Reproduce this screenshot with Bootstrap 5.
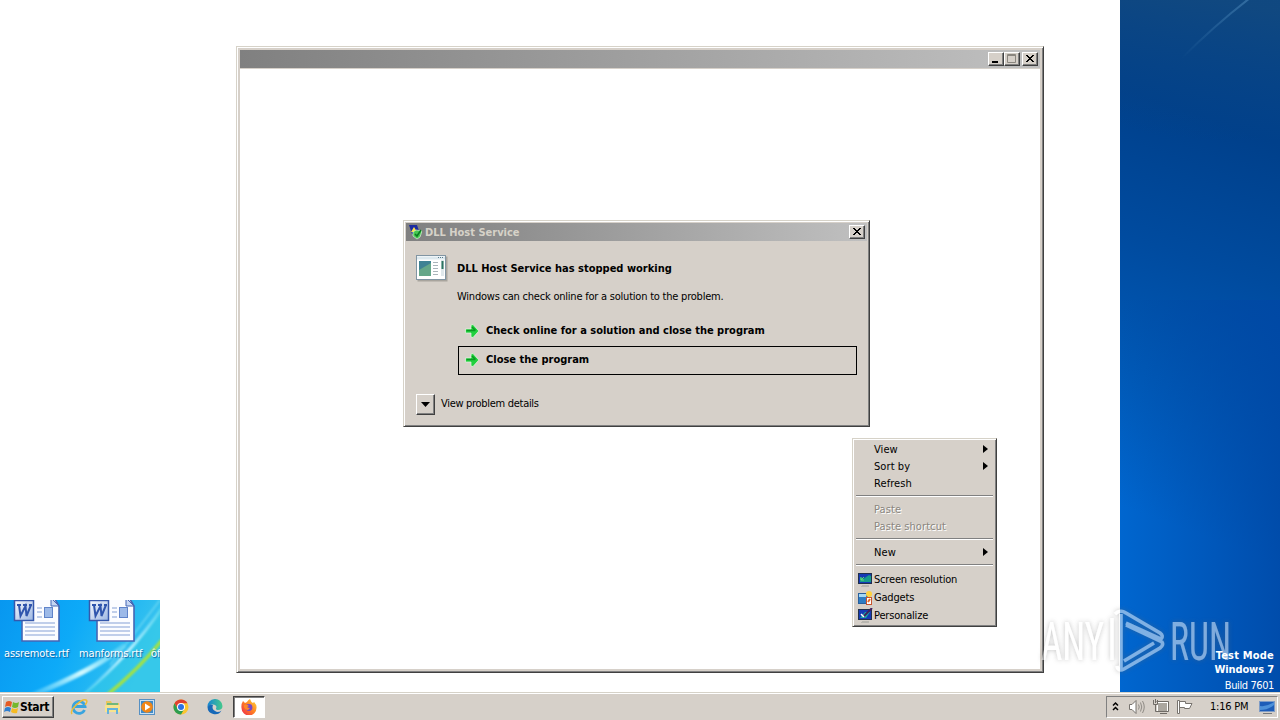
<!DOCTYPE html>
<html lang="en">
<head>
    <meta charset="UTF-8">
    <meta name="viewport" content="width=device-width, initial-scale=1.0">
    <title>Desktop</title>
    <link href="https://cdn.jsdelivr.net/npm/bootstrap@5.3.0/dist/css/bootstrap.min.css" rel="stylesheet">
    <style>
        body {
            width: 1280px;
            height: 720px;
            background: #fff;
            color: #000;
            font: 11px/14px "DejaVu Sans Condensed", "DejaVu Sans", sans-serif;
            font-stretch: condensed;
            letter-spacing: -0.22px;
        }
        svg { display: block; flex: none; }
        .desktop { height: 692px; }
        .win-face { background: #d6d0c9; }
        .bold-ui {
            font-family: "DejaVu Sans Condensed", "DejaVu Sans", sans-serif;
            font-stretch: condensed;
            font-weight: bold;
            letter-spacing: 0;
        }

        /* wallpaper */
        .wall-left { left: 0; top: 600px; width: 160px; height: 92px; }
        .wall-right { right: 0; top: 0; width: 160px; height: 692px; }
        .desk-label {
            top: 47px;
            color: #fff;
            letter-spacing: -0.12px;
            text-shadow: 1px 1px 1px #0b5f9e;
        }
        .test-mode { right: 6px; bottom: -1px; color: #fff; line-height: 14px; letter-spacing: -0.4px; }
        .test-mode .bold-ui { letter-spacing: 0.2px; }
        .test-mode .os-name { letter-spacing: -0.12px; }

        /* windows */
        .raised {
            border: 1px solid;
            border-color: #d6d2c8 #404040 #404040 #d6d2c8;
            box-shadow: inset 1px 1px #fff, inset -1px -1px #808080;
        }
        .main-win { left: 236px; top: 46px; width: 808px; height: 627px; padding: 3px; }
        .title-bar { background: linear-gradient(90deg, #808080, #c0c0c0); }
        .main-win .title-bar { height: 18px; margin-bottom: 1px; padding-right: 2px; }
        .caption-btn {
            width: 16px;
            height: 14px;
            padding: 0;
            background: #d6d0c9;
            border: 1px solid;
            border-color: #fff #404040 #404040 #fff;
            box-shadow: inset -1px -1px #808080;
        }
        .crash-win { left: 403px; top: 220px; width: 467px; height: 207px; padding: 2px; }
        .crash-win .title-bar { height: 18px; color: #d6d2c8; padding: 0 2px 0 2px; }
        .crash-win .title-bar span { padding-top: 1px; }
        .crash-body { padding: 14px 10px 0; }
        .choice { height: 29px; width: 399px; margin-left: 1px; padding: 0 0 2px 6px; border: 1px solid transparent; }
        .choice.chosen { border-color: #000; }
        .expand-btn { width: 19px; height: 21px; }

        /* context menu */
        .ctx-menu { left: 852px; top: 438px; width: 145px; height: 189px; padding: 2px; letter-spacing: 0.08px; }
        .ctx-item { height: 17px; padding: 0 6px 0 19px; }
        .ctx-item > svg:last-child { margin-bottom: 2px; }
        .ctx-item.with-icon { height: 18px; padding: 1px 0 0 2px; letter-spacing: -0.18px; }
        .ctx-item.off { color: #8a867f; text-shadow: 1px 1px #fff; }
        .ctx-line { height: 2px; margin: 3px 1px 4px; border-top: 1px solid #808080; border-bottom: 1px solid #fff; }

        .watermark { left: 1030px; top: 600px; }

        /* taskbar */
        .taskbar { height: 28px; box-shadow: inset 0 1px #d6d2c8, inset 0 2px #fff; padding: 4px 2px 2px; }
        .start-btn { width: 52px; height: 22px; padding: 0 0 0 1px; font-size: 12px; letter-spacing: -0.3px; }
        .task-icon { width: 34px; height: 22px; }
        .task-icon.running {
            width: 32px;
            background: #fff;
            border: 1px solid;
            border-color: #404040 #fff #fff #404040;
            box-shadow: inset 1px 1px #808080;
        }
        .tray {
            width: 172px;
            height: 22px;
            border: 1px solid;
            border-color: #808080 #fff #fff #808080;
            padding-left: 4px;
        }
    </style>
</head>
<body class="overflow-hidden">

<!-- shared icons -->
<svg width="0" height="0" class="position-absolute">
    <defs>
        <linearGradient id="wbox" x1="0" y1="0" x2="1" y2="1"><stop offset="0" stop-color="#f6f9fe"/><stop offset="1" stop-color="#9cb6e2"/></linearGradient>
        <symbol id="word" viewBox="0 0 50 44">
            <path d="M9 -4H40L46 6V41H9Z" fill="#fbfcff" stroke="#4566b5" stroke-width="1.6"/>
            <path d="M38 -2V6H46Z" fill="#c5d5f2" stroke="#4566b5"/>
            <path d="M24 8H29M24 12H29M24 17H29M12 23H42M12 27H42M12 31H42M12 35H42" stroke="#86a0d6" stroke-width="1.2"/>
            <rect x="31.500" y="7.500" width="8" height="10" fill="#9cb9e8" stroke="#5f83c9"/>
            <rect x="1.500" y="0.500" width="19" height="20" fill="url(#wbox)" stroke="#3558ac" stroke-width="1.500"/>
            <path d="M4 5H8M10 5H14M16 5H19M6 5L7.500 16L12.500 6L13.500 16L18 5" fill="none" stroke="#2f55ad" stroke-width="2"/>
        </symbol>
        <symbol id="arrow" viewBox="0 0 14 14">
            <path d="M.5 5H6V1L8 .5L13.800 7L8 13.500L6 13V9H.5Z" fill="#22d03f" stroke="#e6f7e2" stroke-width=".7"/>
            <path d="M1.500 6.500H10M7 3L10.500 6.500" fill="none" stroke="#0a9a22" stroke-width="1.600"/>
        </symbol>
        <symbol id="closex" viewBox="0 0 14 12"><path d="M3 2L10 9M4 2L11 9M10 2L3 9M11 2L4 9" stroke="#000" stroke-width="1"/></symbol>
        <symbol id="sub" viewBox="0 0 5 8"><path d="M0 0L5 4L0 8Z"/></symbol>
        <symbol id="monitor" viewBox="0 0 16 16">
            <rect x="1.500" y="1.500" width="13" height="10" fill="#1539b5" stroke="#20304b"/>
            <path d="M5 13.500H12M4 14.500H12" stroke="#b8b6b0"/>
        </symbol>
    </defs>
</svg>

<main class="desktop position-relative">

    <div class="wall-left position-absolute overflow-hidden">
        <svg width="160" height="92">
            <defs>
                <linearGradient id="sky" x1="0" y1="0" x2="1" y2=".25"><stop offset="0" stop-color="#0897f0"/><stop offset=".5" stop-color="#0daaf8"/><stop offset="1" stop-color="#37c3ee"/></linearGradient>
                <linearGradient id="ray" x1="0" y1="1" x2="1" y2="0"><stop offset="0" stop-color="#9ff0ff" stop-opacity=".2"/><stop offset=".5" stop-color="#d5faff"/><stop offset="1" stop-color="#9ff0ff" stop-opacity=".3"/></linearGradient>
                <filter id="soft"><feGaussianBlur stdDeviation="1.200"/></filter>
            </defs>
            <rect width="160" height="92" fill="url(#sky)"/>
            <path d="M84 92Q130 60 160 8V92Z" fill="#35cfe4" opacity=".45"/>
            <g fill="none" filter="url(#soft)">
                <path d="M30 96Q95 70 125 45" stroke="url(#ray)" stroke-width="5"/>
                <path d="M84 94Q130 55 162 8" stroke="url(#ray)" stroke-width="3"/>
                <path d="M106 96Q140 68 162 40" stroke="#a5e33f" stroke-width="3.500"/>
                <path d="M110 65L160 0" stroke="#8be4f5" stroke-width="1.500" opacity=".6"/>
            </g>
            <use href="#word" x="13" y="0" width="50" height="44"/>
            <use href="#word" x="88" y="0" width="50" height="44"/>
        </svg>
        <span class="desk-label position-absolute" style="left: 4px">assremote.rtf</span>
        <span class="desk-label position-absolute" style="left: 79px">manforms.rtf</span>
        <span class="desk-label position-absolute" style="left: 151px">ôf</span>
    </div>

    <div class="wall-right position-absolute">
        <svg width="160" height="692">
            <defs>
                <linearGradient id="deep" gradientUnits="userSpaceOnUse" x1="120" y1="130" x2="-15" y2="500">
                    <stop offset="0" stop-color="#00408b"/><stop offset=".35" stop-color="#004b9f"/><stop offset=".7" stop-color="#005ab8"/><stop offset="1" stop-color="#0066cf"/>
                </linearGradient>
                <linearGradient id="haze" x1=".6" y1="0" x2=".4" y2="1"><stop offset="0" stop-color="#12497f" stop-opacity=".9"/><stop offset="1" stop-color="#0a4584" stop-opacity="0"/></linearGradient>
                <linearGradient id="shade" x1="0" y1="0" x2="1" y2="0"><stop offset="0" stop-color="#0048a5" stop-opacity="0"/><stop offset="1" stop-color="#0048a5" stop-opacity=".85"/></linearGradient>
                <linearGradient id="streak" x1="0" y1="1" x2="1" y2="0"><stop offset="0" stop-color="#4a86b8" stop-opacity="0"/><stop offset="1" stop-color="#4a86b8" stop-opacity=".6"/></linearGradient>
            </defs>
            <rect width="160" height="692" fill="url(#deep)"/>
            <rect width="160" height="140" fill="url(#haze)"/>
            <rect y="300" width="160" height="392" fill="url(#shade)"/>
            <path d="M62 58Q95 25 130 -2" fill="none" stroke="url(#streak)" stroke-width="2"/>
        </svg>
    </div>

    <section class="main-win raised win-face position-absolute d-flex flex-column">
        <div class="title-bar d-flex justify-content-end align-items-center">
            <button class="caption-btn"><svg width="14" height="12"><path d="M3 9H9" stroke="#000" stroke-width="2"/></svg></button>
            <button class="caption-btn"><svg width="14" height="12"><path d="M2.500 1.500H10.500V9.500H2.500ZM2.500 2.500H10.500" fill="none" stroke="#8a867f"/></svg></button>
            <button class="caption-btn" style="margin-left: 2px"><svg width="14" height="12"><use href="#closex"/></svg></button>
        </div>
        <div class="flex-grow-1 bg-white"></div>
    </section>

    <section class="crash-win raised win-face position-absolute">
        <div class="title-bar d-flex align-items-center bold-ui">
            <svg width="14" height="16" style="margin-right: 3px"><path d="M1 1H9L12 10H4Z" fill="#1c2ca0"/><path d="M3 8L6 3L9 8Z" fill="#ffe14a"/><path d="M5 8L8 6L14 7L12 13L9 15L5 12Z" fill="#46c850" stroke="#d6f4d4" stroke-width=".7"/><path d="M7 10L9 12L13 6" fill="none" stroke="#0a7a20" stroke-width="1.500"/></svg>
            <span class="flex-grow-1">DLL Host Service</span>
            <button class="caption-btn"><svg width="14" height="12"><use href="#closex"/></svg></button>
        </div>
        <div class="crash-body">
            <div class="d-flex">
                <svg width="32" height="28">
                    <rect x="1.500" y="1.500" width="30" height="25" fill="#a8a49d"/>
                    <rect x=".5" y=".5" width="29" height="24" fill="#fff" stroke="#8195a3"/>
                    <path d="M1 3H29" stroke="#dce8ee" stroke-width="3"/>
                    <path d="M22 2.500H28" stroke="#557889" stroke-dasharray="1 1"/>
                    <rect x="3" y="6" width="12" height="15" fill="#3f8294"/><path d="M3 21V15L15 8V21Z" fill="#65a789"/>
                    <path d="M17 7.500H22M17 10.500H22M17 13.500H22M17 16.500H22M17 19.500H22" stroke="#aab4ba"/>
                    <rect x="25" y="5" width="3" height="16" fill="#e0e8eb"/><path d="M26.500 6V14" stroke="#2d7461" stroke-width="2"/>
                </svg>
                <div style="padding: 7px 0 0 9px">
                    <div class="bold-ui">DLL Host Service has stopped working</div>
                    <div style="margin-top: 14px">Windows can check online for a solution to the problem.</div>
                    <div class="choice bold-ui d-flex align-items-center" style="margin-top: 13px">
                        <svg width="14" height="14" style="margin-right: 7px"><use href="#arrow"/></svg>Check online for a solution and close the program
                    </div>
                    <div class="choice chosen bold-ui d-flex align-items-center">
                        <svg width="14" height="14" style="margin-right: 7px"><use href="#arrow"/></svg>Close the program
                    </div>
                </div>
            </div>
            <div class="d-flex align-items-center" style="margin-top: 19px">
                <button class="caption-btn expand-btn d-flex align-items-center justify-content-center"><svg width="9" height="5"><path d="M0 0H9L4.500 5Z"/></svg></button>
                <span style="margin: 0 0 2px 6px; letter-spacing: -0.3px">View problem details</span>
            </div>
        </div>
    </section>

    <nav class="ctx-menu raised win-face position-absolute">
        <div class="ctx-item d-flex justify-content-between align-items-center">View<svg width="5" height="8"><use href="#sub"/></svg></div>
        <div class="ctx-item d-flex justify-content-between align-items-center">Sort by<svg width="5" height="8"><use href="#sub"/></svg></div>
        <div class="ctx-item d-flex align-items-center">Refresh</div>
        <div class="ctx-line"></div>
        <div class="ctx-item off d-flex align-items-center">Paste</div>
        <div class="ctx-item off d-flex align-items-center">Paste shortcut</div>
        <div class="ctx-line"></div>
        <div class="ctx-item d-flex justify-content-between align-items-center">New<svg width="5" height="8"><use href="#sub"/></svg></div>
        <div class="ctx-line"></div>
        <div class="ctx-item with-icon d-flex align-items-center">
            <svg width="16" height="16" style="margin-right: 1px"><use href="#monitor"/><path d="M3 10V5L6 7L12 3L14 4V10Z" fill="#159b8b"/><path d="M4 8L7 5M4 5V8H7" stroke="#63e06c" fill="none"/></svg><span>Screen resolution</span>
        </div>
        <div class="ctx-item with-icon d-flex align-items-center">
            <svg width="16" height="16" style="margin-right: 1px"><rect x="1.500" y="3.500" width="9" height="10" fill="#2d7cc4" stroke="#285f9c"/><path d="M2 5.500H9" stroke="#a6d8f2" stroke-width="3"/><circle cx="12" cy="4" r="3" fill="#ffd23d"/><rect x="9.500" y="7.500" width="5" height="7" fill="#fff" stroke="#c7532d"/><path d="M11 12L13 9" stroke="#df6a2d" stroke-width="2"/></svg><span>Gadgets</span>
        </div>
        <div class="ctx-item with-icon d-flex align-items-center">
            <svg width="16" height="16" style="margin-right: 1px"><use href="#monitor"/><path d="M3 10L8 4H13L9 10Z" fill="#18a9a8"/><path d="M6 9L15 0" stroke="#40215e" stroke-width="2"/><path d="M4 6L7 9" stroke="#fff" stroke-width="1.500"/></svg><span>Personalize</span>
        </div>
    </nav>

    <svg class="watermark position-absolute" width="210" height="92" font-family="Roboto, sans-serif" font-size="53" letter-spacing="0">
        <defs><filter id="wm" x="-10%" y="-20%" width="120%" height="140%"><feDropShadow dx="0" dy="0" stdDeviation="2.400" flood-color="#666" flood-opacity=".8"/></filter></defs>
        <g fill="#fff" opacity=".5" filter="url(#wm)">
            <text x="11" y="60" textLength="63" lengthAdjust="spacingAndGlyphs">ANY</text>
            <text x="140" y="60" textLength="61" lengthAdjust="spacingAndGlyphs">RUN</text>
            <path d="M82 18V60M85 14Q90 9 96 13L130 33Q134 36 131 39L96 23M91 14V69M96 25L132 42Q134 45 130 48L94 69Q88 72 87 66M94 61L124 43" fill="none" stroke="#fff" stroke-width="3.500"/>
        </g>
    </svg>

    <div class="test-mode position-absolute text-end">
        <div class="bold-ui">Test Mode</div>
        <div class="bold-ui os-name">Windows 7</div>
        <div style="margin-top: 2px">Build 7601</div>
    </div>
</main>

<footer class="taskbar win-face d-flex align-items-center justify-content-between">
    <div class="d-flex align-items-center">
        <button class="caption-btn start-btn bold-ui d-flex align-items-center">
            <svg width="16" height="16"><path d="M2 3Q5 1 8 3L7 8Q4 6 1 8Z" fill="#e65b24"/><path d="M9 3Q12 5 15 3L14 8Q11 10 8 8Z" fill="#74b82d"/><path d="M1 9Q4 7 7 9L6 13Q3 11 0 13Z" fill="#2f7fd0"/><path d="M8 9Q11 11 14 9L13 14Q10 15 7 13Z" fill="#f6bb22"/></svg><span style="letter-spacing: -0.3px">Start</span>
        </button>
        <div class="task-icon d-flex align-items-center justify-content-center" style="margin-left: 8px">
            <svg width="18" height="18"><path d="M14.500 12A6 6 0 1 1 15 8.500H5" fill="none" stroke="#39a4df" stroke-width="2.800"/><path d="M2 16C-1 12 12 0 16 2C18 3 16 6 15 7" fill="none" stroke="#edbd36" stroke-width="1.500"/></svg>
        </div>
        <div class="task-icon d-flex align-items-center justify-content-center">
            <svg width="18" height="16"><path d="M2 2H7L8 4H15V13H2Z" fill="#e8c65b"/><path d="M3 4H14V7H3Z" fill="#70b77b"/><path d="M1 6H16V13H1Z" fill="#f7e38e"/><path d="M4 15V10H13V15" fill="none" stroke="#63b2dc" stroke-width="2"/></svg>
        </div>
        <div class="task-icon d-flex align-items-center justify-content-center">
            <svg width="16" height="16"><rect x=".5" y=".5" width="15" height="15" fill="#c9e0f2" stroke="#5690c3"/><rect x="2" y="2" width="12" height="12" fill="#3e8ac9"/><circle cx="8" cy="8" r="5.800" fill="#f18616"/><path d="M6 4.500L11.500 8L6 11.500Z" fill="#fff"/></svg>
        </div>
        <div class="task-icon d-flex align-items-center justify-content-center">
            <svg width="16" height="16"><circle cx="8" cy="8" r="7.500" fill="#fbc52f"/><path d="M1.500 4.250A7.500 7.500 0 0 1 14.500 4.250H8L4.750 10Z" fill="#df4030"/><path d="M1.500 4.250A7.500 7.500 0 0 0 8 15.500L11.250 10H4.750Z" fill="#2c9d50"/><circle cx="8" cy="8" r="4" fill="#fff"/><circle cx="8" cy="8" r="3" fill="#2d72e4"/></svg>
        </div>
        <div class="task-icon d-flex align-items-center justify-content-center">
            <svg width="16" height="16"><defs><linearGradient id="edge"><stop offset="0" stop-color="#1785d2"/><stop offset="1" stop-color="#45c98c"/></linearGradient></defs><path d="M.5 8A7.500 7.500 0 0 1 15.500 7Q15.500 11 11 11Q8 11 9.500 8Q9 5 5 5.500Q2 6 .5 8Z" fill="url(#edge)"/><path d="M.5 8Q2 5 6 6Q4 11 10 13Q13 13 14.500 11.500A7.500 7.500 0 0 1 .5 8Z" fill="#1769b8"/></svg>
        </div>
        <div class="task-icon running d-flex align-items-center justify-content-center" style="margin-left: 1px">
            <svg width="16" height="16"><defs><linearGradient id="fox" x1="1" y1="0" x2="0" y2="1"><stop offset="0" stop-color="#ffdc3a"/><stop offset=".5" stop-color="#ff7e24"/><stop offset="1" stop-color="#ec2350"/></linearGradient></defs><path d="M2 2L4 4L6 3Q7 1 9 0Q10 3 12 4L13 3Q16 6 15.500 9A7.500 7.500 0 0 1 .5 9Q0 5 2 2Z" fill="url(#fox)"/><circle cx="8" cy="8.500" r="3.400" fill="#7548c8"/><path d="M3 6Q6 5 8 7L6 8Q7 9 9 9L7 11Q4 11 3 8Z" fill="#ff8825"/></svg>
        </div>
    </div>
    <div class="tray d-flex align-items-center">
        <svg width="9" height="12"><path d="M2 4.500L4.500 2L7 4.500M2 9L4.500 6.500L7 9" fill="none" stroke="#000" stroke-width="1.500"/></svg>
        <svg width="18" height="16" style="margin-left: 8px"><path d="M1.500 5.500H4L8 1.500V14.500L4 10.500H1.500Z" fill="#fff" stroke="#77736e"/><path d="M10.500 5.500Q12 8 10.500 10.500M12.500 3.500Q15 8 12.500 12.500M14.500 2Q18 8 14.500 14" fill="none" stroke="#8f8b85"/></svg>
        <svg width="18" height="16" style="margin-left: 6px"><rect x="5.500" y="3.500" width="10" height="9" fill="#aaa69f" stroke="#fff"/><path d="M4.500 2.500H16.500V12.500H7M8 14.500H15M1.500 1V5.500H5.500V1M3.500 0V4M3.500 6V12.500H7" fill="none" stroke="#6f6b66"/></svg>
        <svg width="18" height="16" style="margin-left: 6px"><path d="M1.500 1.500H3.500V14.500H1.500ZM3.500 2.500H9.500V4.500H16L13.500 9.500H8.500V8.500H3.500Z" fill="#fff" stroke="#77736e"/></svg>
        <span style="margin-left: 16px">1:16 PM</span>
        <svg width="17" height="15" style="margin-left: 11px"><rect x=".5" y="1.500" width="15" height="10" fill="#1e5db8" stroke="#7f9cc6"/><path d="M1 10V6Q8 7 15 2V5Q9 10 1 10Z" fill="#4e91d9"/><path d="M4 13.500H13" stroke="#77797c"/></svg>
    </div>
</footer>

<script src="https://cdn.jsdelivr.net/npm/bootstrap@5.3.0/dist/js/bootstrap.bundle.min.js"></script>
</body>
</html>
